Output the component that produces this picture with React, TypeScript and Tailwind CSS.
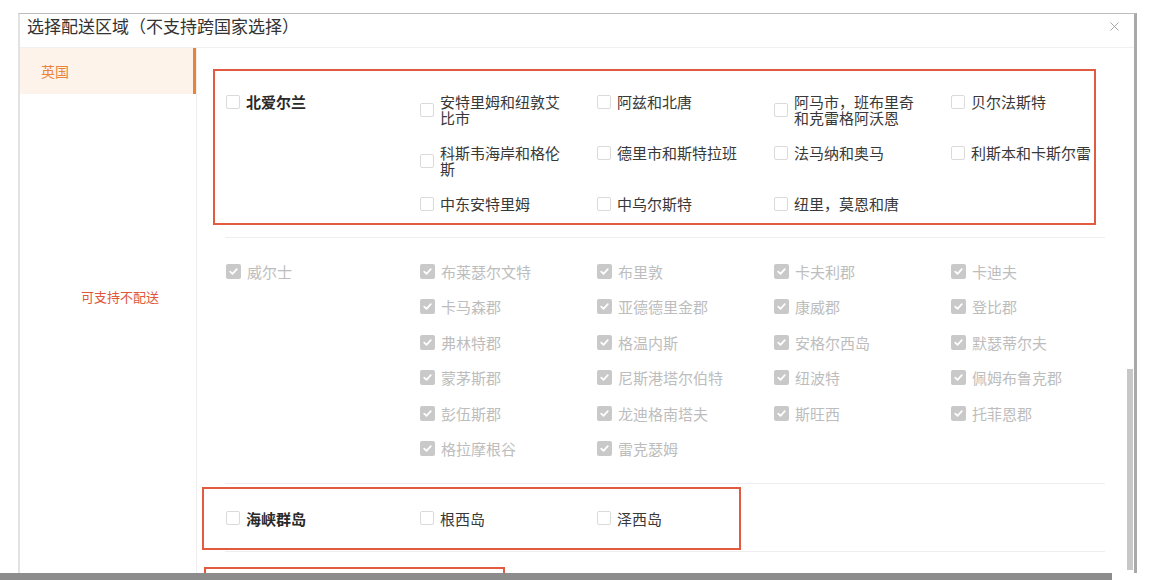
import { X } from "lucide-react"

type ItemProps = {
  label: string
  disabled?: boolean
  bold?: boolean
}

const northernIreland = [
  "安特里姆和纽敦艾比市",
  "阿兹和北唐",
  "阿马市，班布里奇和克雷格阿沃恩",
  "贝尔法斯特",
  "科斯韦海岸和格伦斯",
  "德里市和斯特拉班",
  "法马纳和奥马",
  "利斯本和卡斯尔雷",
  "中东安特里姆",
  "中乌尔斯特",
  "纽里，莫恩和唐",
]

const wales = [
  "布莱瑟尔文特",
  "布里敦",
  "卡夫利郡",
  "卡迪夫",
  "卡马森郡",
  "亚德德里金郡",
  "康威郡",
  "登比郡",
  "弗林特郡",
  "格温内斯",
  "安格尔西岛",
  "默瑟蒂尔夫",
  "蒙茅斯郡",
  "尼斯港塔尔伯特",
  "纽波特",
  "佩姆布鲁克郡",
  "彭伍斯郡",
  "龙迪格南塔夫",
  "斯旺西",
  "托菲恩郡",
  "格拉摩根谷",
  "雷克瑟姆",
]

const channelIslands = ["根西岛", "泽西岛"]

function Checkbox({ checked }: { checked?: boolean }) {
  if (checked) {
    return (
      <span className="flex h-[15px] w-[15px] shrink-0 items-center justify-center rounded-[2px] bg-[#c9c9c9]">
        <svg width="11" height="11" viewBox="0 0 10 10" fill="none">
          <path d="M2 5.2 4.1 7.2 8 2.9" stroke="#fff" strokeWidth="1.6" strokeLinecap="round" strokeLinejoin="round" />
        </svg>
      </span>
    )
  }
  return <span className="h-[14px] w-[14px] shrink-0 rounded-[2px] border border-[#dadada] bg-white" />
}

function Item({ label, disabled, bold }: ItemProps) {
  return (
    <div className="flex items-center gap-[6px] py-[10px]">
      <Checkbox checked={disabled} />
      <span
        className={
          "max-w-[122px] text-[15px] leading-[15.5px] " +
          (disabled ? "text-[#bdbdbd]" : bold ? "font-bold text-[#2a2a2a]" : "text-[#383838]")
        }
      >
        {label}
      </span>
    </div>
  )
}

function GroupRow({ label, items, disabled }: { label: string; items: string[]; disabled?: boolean }) {
  return (
    <div className="flex">
      <div className="w-[194px] shrink-0">
        <Item label={label} disabled={disabled} bold={!disabled} />
      </div>
      <div className="grid grid-cols-[177px_177px_177px_177px] content-start items-start">
        {items.map((name) => (
          <Item key={name} label={name} disabled={disabled} />
        ))}
      </div>
    </div>
  )
}

export default function App() {
  return (
    <div
      className="flex h-[580px] w-[1159px] flex-col overflow-hidden bg-white pt-[13px]"
      style={{ fontFamily: '"Noto Sans CJK SC", "Noto Sans", sans-serif' }}
    >
      {/* Modal */}
      <div className="ml-[18px] flex min-h-0 w-[1119px] flex-1 flex-col overflow-hidden border-l-2 border-r-[3px] border-t border-l-[#e2e2e2] border-r-[#a9a9a9] border-t-[#bdbdbd]">
        <div className="flex h-[34px] shrink-0 items-start justify-between border-b border-[#f0f0f0] pl-[7px] pr-[12px]">
          <h2 className="text-[17px] leading-[24px] text-[#333]">选择配送区域（不支持跨国家选择）</h2>
          <X className="mt-[5px] h-[15px] w-[15px] text-[#a0a0a0]" strokeWidth={1.5} />
        </div>

        <div className="flex min-h-0 flex-1">
          {/* Country list */}
          <div className="w-[177px] shrink-0 border-r border-[#efefef]">
            <div className="flex h-[46px] items-center border-r-[3px] border-[#e8843c] bg-[#fdf3ea] pl-[21px] text-[14px] text-[#e8843c]">
              英国
            </div>
            <p className="mt-[193px] pl-[61px] text-[13px] text-[#e0573b]">可支持不配送</p>
          </div>

          {/* Regions */}
          <div className="min-w-0 flex-1">
            <div className="ml-[28px] mr-[22px] border-b border-[#eeeeee] pb-[12px] pt-[21px]">
              <div className="-ml-[12px] w-[883px] border-2 border-[#e25a3f] pb-[1px] pl-[11px] pt-[13px]">
                <GroupRow label="北爱尔兰" items={northernIreland} />
              </div>
            </div>

            <div className="ml-[28px] mr-[22px] border-b border-[#eeeeee] pb-[16px] pl-[1px] pt-[16px]">
              <GroupRow label="威尔士" items={wales} disabled />
            </div>

            <div className="ml-[28px] mr-[22px] border-b border-[#eeeeee] pb-[1px] pt-[3px]">
              <div className="-ml-[23px] w-[539px] border-2 border-[#e25a3f] py-[12px] pl-[22px]">
                <GroupRow label="海峡群岛" items={channelIslands} />
              </div>
            </div>

            <div className="ml-[28px] mr-[22px] pt-[15px]">
              <div className="-ml-[21px] h-[20px] w-[301px] border-2 border-b-0 border-[#e25a3f]" />
            </div>
          </div>

          {/* Scrollbar */}
          <div className="w-[7px] shrink-0 pt-[321px]">
            <div className="h-[201px] w-[6px] bg-[#c7c7c7]" />
          </div>
        </div>
      </div>

      <div className="h-[7px] w-[1112px] shrink-0 bg-[#8c8c8c]" />
    </div>
  )
}
